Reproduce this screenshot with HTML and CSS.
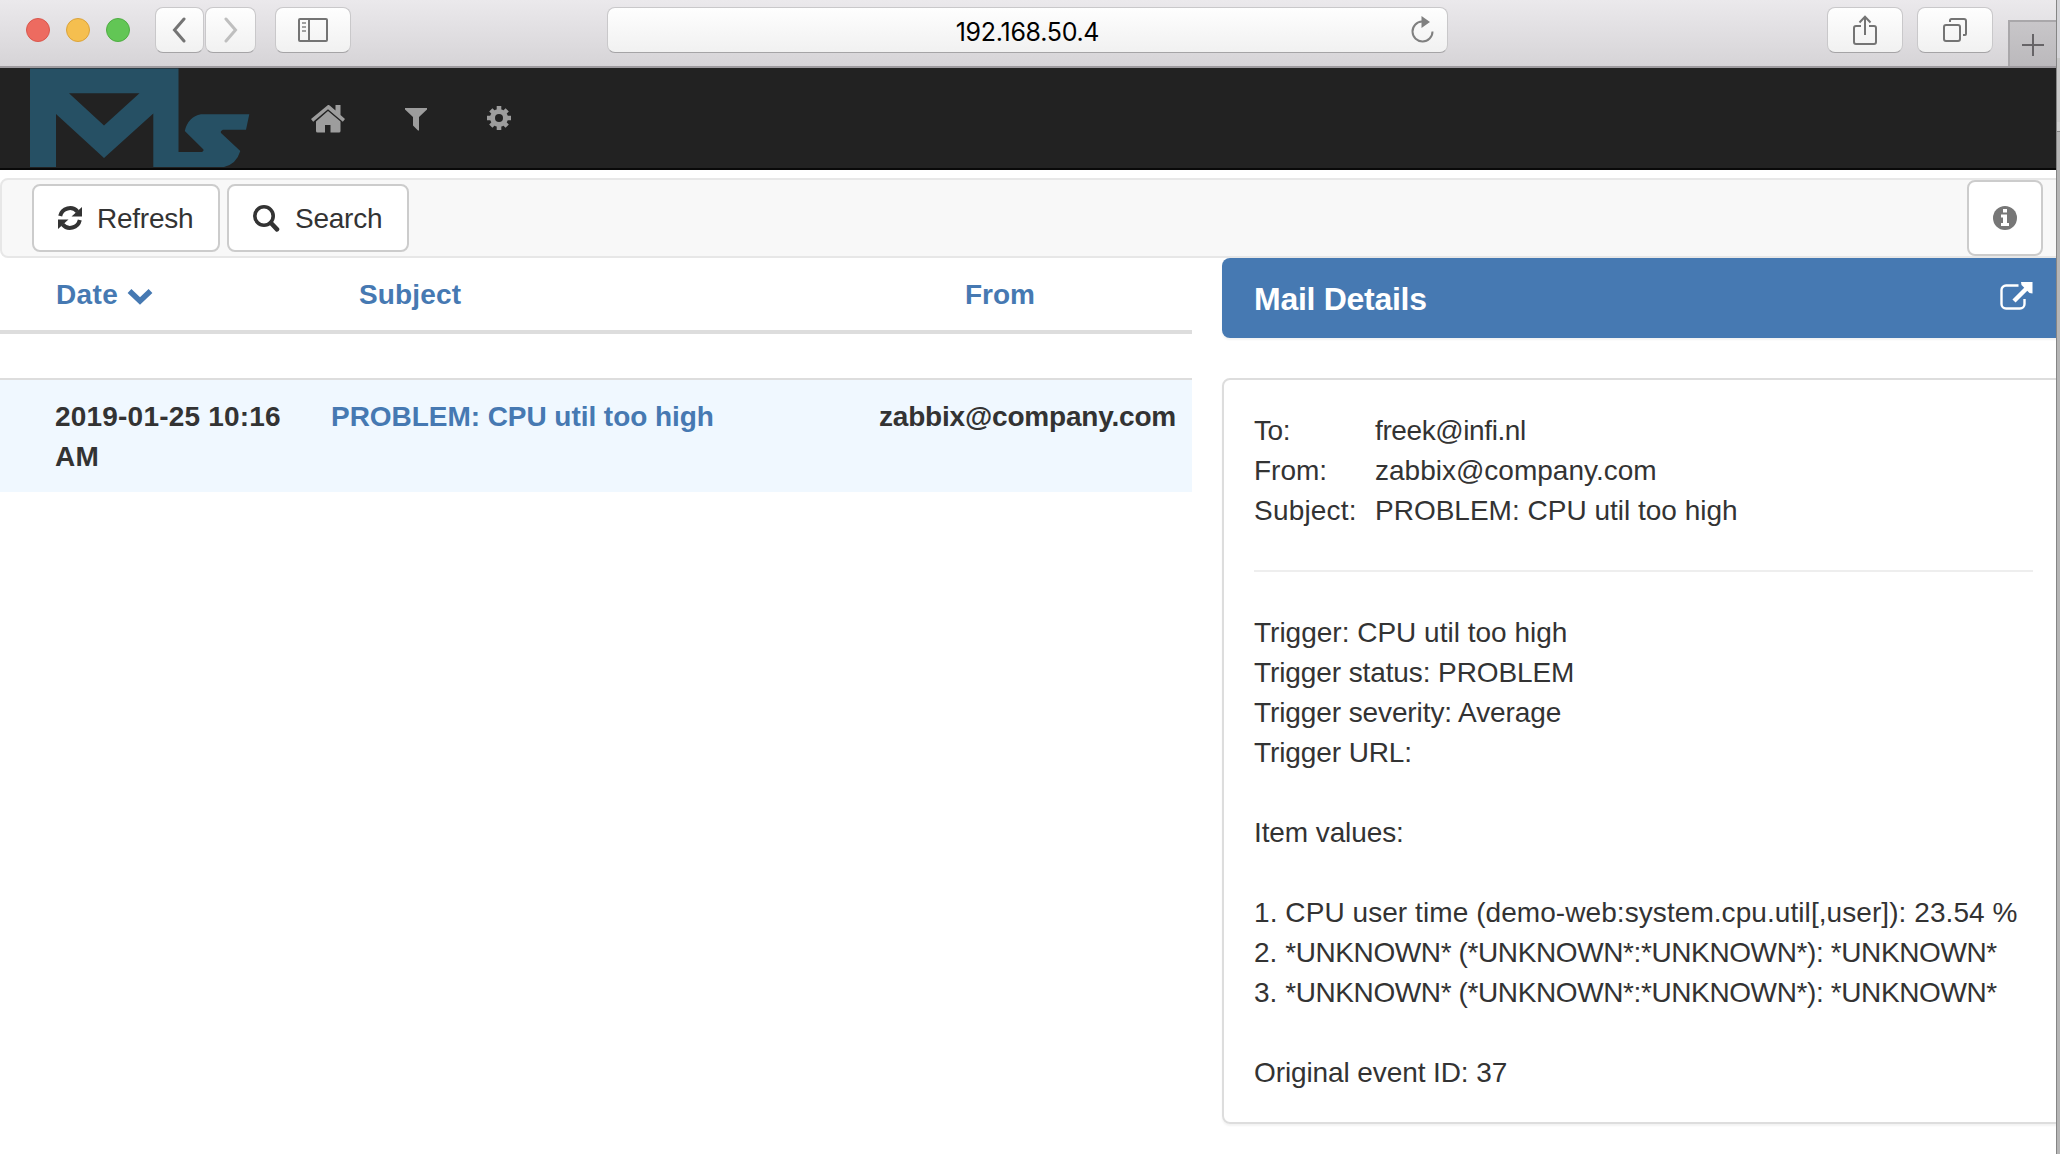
FILE: index.html
```html
<!DOCTYPE html>
<html lang="en">
<head>
<meta charset="utf-8">
<title>Mail search</title>
<link rel="stylesheet" href="styles.css">
</head>
<body>
<div class="screen">
<div class="window">
  <header class="titlebar">
    <div class="lights"><i class="light red"></i><i class="light yellow"></i><i class="light green"></i></div>
    <div class="history">
      <div class="tool back"><svg width="14" height="26" viewBox="0 0 14 26"><path d="M12 2 2.500 13 12 24" fill="none" stroke="#747474" stroke-width="3" stroke-linecap="round"/></svg></div>
      <div class="tool forward"><svg width="14" height="26" viewBox="0 0 14 26"><path d="M2 2 11.500 13 2 24" fill="none" stroke="#bfbfbf" stroke-width="3" stroke-linecap="round"/></svg></div>
    </div>
    <div class="tool sidebar"><svg width="30" height="24" viewBox="0 0 30 24" fill="none" stroke="#747474"><rect x="1" y="1" width="28" height="22" rx="1" stroke-width="2"/><path d="M11 1v22" stroke-width="2"/><path d="M4 5h4M4 9h4M4 13h4" stroke="#a0a0a0" stroke-width="2"/></svg></div>
    <div class="address"><span class="host">192.168.50.4</span><svg class="reload" width="24" height="28" viewBox="0 0 24 28"><path d="M11 5.500A10 10 0 1 0 21.500 15.500" fill="none" stroke="#808080" stroke-width="2"/><path d="M10.500 0v12L19 6z" fill="#808080"/></svg></div>
    <div class="tool share"><svg width="24" height="30" viewBox="0 0 24 30" fill="none" stroke="#747474" stroke-width="2"><path d="M8 11H3a2 2 0 0 0-2 2v14a2 2 0 0 0 2 2h18a2 2 0 0 0 2-2V13a2 2 0 0 0-2-2h-5M12 20V2M6.500 7.500 12 1.800l5.500 5.700"/></svg></div>
    <div class="tool tabs"><svg width="24" height="24" viewBox="0 0 24 24" fill="none" stroke="#747474" stroke-width="2"><rect x="1" y="7" width="16" height="16" rx="2"/><path d="M7 4V2.500A1.500 1.500 0 0 1 8.500 1H21a2 2 0 0 1 2 2v13a1 1 0 0 1-1 1h-2"/></svg></div>
    <div class="newtab"><svg width="22" height="22" viewBox="0 0 22 22"><path d="M0 11h22M11 0v22" stroke="#666467" stroke-width="2"/></svg></div>
  </header>

  <nav class="navbar">
    <svg class="logo" width="220" height="99" viewBox="30 68 220 99"><path fill="#265064" fill-rule="evenodd" d="M30 68.500H178.500V152H202Q204.500 150.500 203 149L184.800 131Q188 117 201 114.300H249.300L246 129.700H223Q220 131 221 133L240.300 151Q236.500 164 224 167H153.300V113.500L104 158 56 114V167H30zM69 93.300 104 125.500 139.500 93.300z"/></svg>
    <svg class="home" width="34" height="28" viewBox="0 0 34 28" fill="#9d9d9d"><path d="M17 0 0 14l2.200 2.800L17 4.200l14.800 12.600L34 14l-4.500-4V0h-5v5.600L19 .8Q17 -.6 17 0z"/><path d="M17 6 5 16.500V26q0 1.500 1.500 1.500H14V20h5.500v7.500h8.500q1.500 0 1.500-1.500v-9.500z"/></svg>
    <svg class="filter" width="22" height="24" viewBox="0 0 22 24" fill="#9d9d9d"><path d="M0 1h22v1.500L14 10v13.500h-1L8 18.500V10L0 2.500z"/></svg>
    <svg class="cog" width="24" height="24" viewBox="0 0 24 24"><g stroke="#9d9d9d" stroke-width="4.600"><path d="M12 0v24M0 12h24M3.800 3.800l16.400 16.400M20.200 3.800 3.800 20.200"/></g><circle cx="12" cy="12" r="9" fill="#9d9d9d"/><circle cx="12" cy="12" r="4" fill="#222"/></svg>
  </nav>

  <div class="toolbar">
    <button class="btn refresh"><svg width="24" height="24" viewBox="0 0 24 24"><path d="M2.200 10A10 10 0 0 1 19.500 5.600M21.800 14A10 10 0 0 1 4.500 18.400" fill="none" stroke="#333" stroke-width="4"/><path d="M24 1v9.500H13.500zM0 23v-9.500h10.500z" fill="#333"/></svg><span class="label">Refresh</span></button>
    <button class="btn search"><svg width="27" height="27" viewBox="0 0 27 27" fill="none" stroke="#333"><circle cx="11" cy="11" r="9.200" stroke-width="3.600"/><path d="m18 18 6 6.300" stroke-width="4.600" stroke-linecap="round"/></svg><span class="label">Search</span></button>
    <button class="btn info"><svg width="24" height="24" viewBox="0 0 24 24"><circle cx="12" cy="12" r="12" fill="#777"/><path d="M10 3h4v3.500h-4zM8 8.500h6V17h2v3H8v-3h2v-5.500H8z" fill="#fff"/></svg></button>
  </div>

  <main class="content">
    <section class="mails">
      <div class="row head">
        <div class="date">Date<svg width="26" height="18" viewBox="0 0 26 18"><path d="M2.500 4 13 14 23.500 4" fill="none" stroke="#4679b2" stroke-width="5.500"/></svg></div>
        <div class="subject">Subject</div>
        <div class="from">From</div>
      </div>
      <div class="row mail">
        <div class="date">2019-01-25 10:16<br>AM</div>
        <div class="subject">PROBLEM: CPU util too high</div>
        <div class="from">zabbix@company.com</div>
      </div>
    </section>
    <section class="details">
      <div class="panel-title"><h2>Mail Details</h2><svg width="33" height="28" viewBox="0 0 33 28"><path d="M18.500 3.500H6a4.500 4.500 0 0 0-4.500 4.500v14A4.500 4.500 0 0 0 6 26.500h14a4.500 4.500 0 0 0 4.500-4.500v-5" fill="none" stroke="#fff" stroke-width="2.400"/><path d="M14 19 28 5" stroke="#fff" stroke-width="4.500"/><path d="M21 0H32.500V11.500L29.500 11 21.500 3z" fill="#fff"/></svg></div>
      <div class="panel">
        <dl class="meta">
          <dt class="tight">To:</dt><dd class="tight">freek@infi.nl</dd>
          <dt>From:</dt><dd>zabbix@company.com</dd>
          <dt class="loose">Subject:</dt><dd>PROBLEM: CPU util too high</dd>
        </dl>
        <hr>
        <div class="message">
          <p>Trigger: CPU util too high<br><span class="snug">Trigger status: PROBLEM<br>Trigger severity: Average<br>Trigger URL:</span></p>
          <p class="snug">Item values:</p>
          <p><span class="wide">1. CPU user time (demo-web:system.cpu.util[,user]): 23.54 %</span><br>2. <span class="unknown">*UNKNOWN* (*UNKNOWN*:*UNKNOWN*): *UNKNOWN*</span><br>3. <span class="unknown">*UNKNOWN* (*UNKNOWN*:*UNKNOWN*): *UNKNOWN*</span></p>
          <p class="snug">Original event ID: 37</p>
        </div>
      </div>
    </section>
  </main>
</div>
<aside class="edge"></aside>
</div>
</body>
</html>
```
FILE: styles.css
```css
* { box-sizing: border-box; }
body {
  margin: 0;
  background: #fff;
  color: #333;
  font: 28px/40px "Liberation Sans", Arial, sans-serif;
}
svg { display: block; flex: none; }
.screen { display: flex; width: 2060px; height: 1154px; overflow: hidden; }
.window { width: 2056px; flex: none; overflow: hidden; }
.edge {
  flex: 1;
  border-left: 1px solid #858585;
  background: linear-gradient(#d5d5d9 0 58px, #c9c9c9 58px 122px, #d0d0d0 122px 131px, #858585 131px 132px, #b5b5b5 132px);
}

/* Browser title bar */
.titlebar {
  display: flex;
  height: 68px;
  padding: 7px 0 0 26px;
  border-bottom: 2px solid #9d9a9e;
  background: linear-gradient(#ebe9ec, #d6d4d7);
}
.lights { display: flex; gap: 16px; padding-top: 11px; width: 129px; }
.light { width: 24px; height: 24px; border-radius: 50%; border: 1px solid; }
.red { background: #ed6b60; border-color: #d9574d; }
.yellow { background: #f5bf4f; border-color: #dba33b; }
.green { background: #62c655; border-color: #4fad43; }
.history { display: flex; gap: 1px; width: 120px; }
.tool, .address {
  display: flex;
  align-items: center;
  justify-content: center;
  height: 46px;
  border: 1px solid #c9c8ca;
  border-bottom: 1px solid #a5a4a6;
  border-radius: 8px;
  background: linear-gradient(#fefefe, #f1f1f1);
}
.back { width: 49px; padding-right: 2px; }
.forward { width: 51px; }
.sidebar { width: 76px; }
.address { width: 841px; margin-left: 256px; padding-right: 12px; }
.host {
  flex: 1;
  padding: 3px 0 0 36px;
  text-align: center;
  color: #000;
  font-family: Inter, "Liberation Sans", sans-serif;
  font-size: 25px;
  letter-spacing: -.3px;
}
.share { width: 76px; margin-left: 379px; }
.tabs { width: 76px; margin-left: 14px; }
.newtab {
  display: flex;
  align-items: center;
  justify-content: center;
  flex: 1;
  height: 46px;
  margin: 13px 0 0 15px;
  padding-top: 2px;
  border: 2px solid #a9a7aa;
  border-width: 2px 0 0 2px;
  background: linear-gradient(#c8c6c9, #bbb9bc);
}

/* Site navigation */
.navbar {
  display: flex;
  height: 102px;
  padding-left: 30px;
  border-bottom: 2px solid #090909;
  background: #222;
}
.home { margin: 37px 0 0 60.5px; }
.filter { margin: 39px 0 0 60.5px; }
.cog { margin: 38px 0 0 60px; }

.toolbar {
  display: flex;
  height: 80px;
  margin: 8px -10px 0 0;
  padding: 4px 0 0 30px;
  border: 2px solid #e7e7e7;
  border-radius: 8px;
  background: #f8f8f8;
}
.btn {
  display: flex;
  align-items: center;
  height: 68px;
  border: 2px solid #ccc;
  border-radius: 8px;
  background: #fff;
  color: #333;
  font: inherit;
  padding: 0 0 0 24px;
}
.label { padding-top: 2px; letter-spacing: -.25px; }
.refresh { width: 188px; gap: 15px; }
.search { width: 182px; margin-left: 7px; gap: 15px; }
.info { width: 76px; height: 76px; margin: -4px 21px 0 auto; padding: 0; justify-content: center; }

/* Mail list */
.content { display: flex; justify-content: space-between; }
.mails { width: 1192px; font-weight: 700; }
.row { display: grid; padding: 17px 0 15px; }
.head {
  grid-template-columns: 359px 606px 1fr;
  height: 76px;
  border-bottom: 4px solid #ddd;
  color: #4679b2;
}
.head .date { display: flex; gap: 9px; padding-left: 56px; letter-spacing: .4px; }
.head .subject { letter-spacing: .15px; }
.head svg { margin-top: 12px; }
.mail {
  grid-template-columns: 331px 548px 1fr;
  margin-top: 44px;
  border-top: 2px solid #ddd;
  background: #f0f8ff;
}
.mail .date { padding-left: 55px; letter-spacing: .2px; }
.mail .subject { color: #4679b2; letter-spacing: -.05px; }
.mail .from { letter-spacing: -.2px; }

/* Mail details, running past the right edge of the window */
.details { width: 834px; }
.panel-title, .panel {
  width: 844px;
  border-radius: 8px;
  box-shadow: 0 2px 2px rgba(0, 0, 0, .05);
}
.panel-title {
  display: flex;
  justify-content: space-between;
  height: 80px;
  padding: 24px 33px 0 32px;
  background: #4679b2;
  color: #fff;
}
h2 { margin: -3px 0 0; font-size: 32px; line-height: 40px; letter-spacing: -.28px; }
.panel {
  margin-top: 40px;
  padding: 31px 30px 29px;
  border: 2px solid #ddd;
}
.meta { display: grid; grid-template-columns: 121px 1fr; margin: 0; }
dd { margin: 0; }
hr { height: 2px; width: 779px; margin: 39px 0 41px; border: 0; background: #eee; }
p { margin: 0 0 40px; white-space: nowrap; }
p:last-child { margin: 0; }
.tight { letter-spacing: -.4px; }
.snug { letter-spacing: -.1px; }
.loose { letter-spacing: .2px; }
.wide { letter-spacing: .07px; }
.unknown { letter-spacing: -.39px; }
```
